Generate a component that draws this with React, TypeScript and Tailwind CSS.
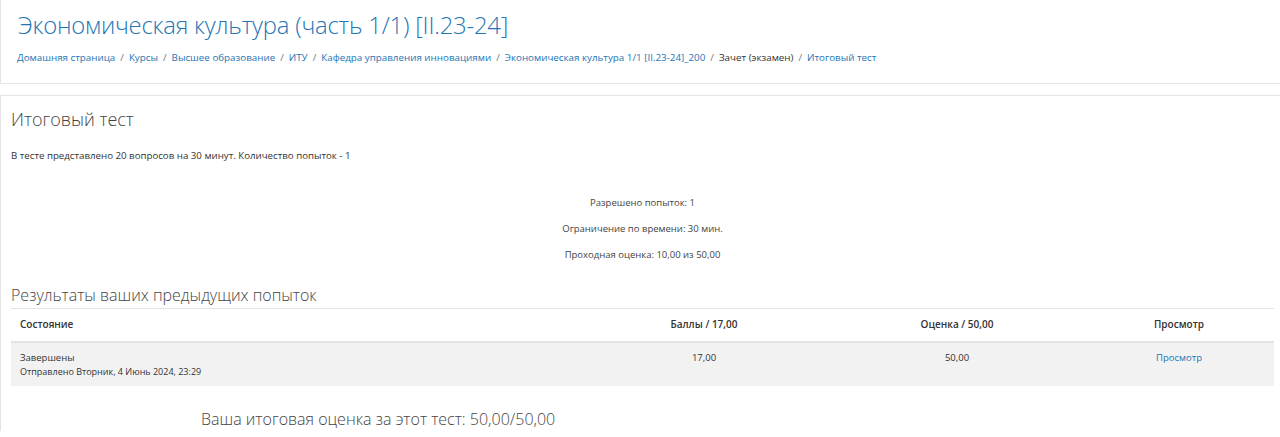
import React from 'react';

const crumbs = [
  { text: 'Домашняя страница', link: true },
  { text: 'Курсы', link: true },
  { text: 'Высшее образование', link: true },
  { text: 'ИТУ', link: true },
  { text: 'Кафедра управления инновациями', link: true },
  { text: 'Экономическая культура 1/1 [II.23-24]_200', link: true },
  { text: 'Зачет (экзамен)', link: false },
  { text: 'Итоговый тест', link: true },
];

const App: React.FC = () => {
  return (
    <div className="min-h-screen bg-white text-[#333] font-['Open_Sans',sans-serif]">
      {/* Шапка курса */}
      <header className="border-l border-b border-[#e5e5e5] pl-[17px] pt-[8px] pb-[16px] h-[84px]">
        <h1 className="text-[23.8px] leading-[34px] font-light text-[#2475b5] tracking-[-0.2px]">
          Экономическая культура (часть 1/1) [II.23-24]
        </h1>
        <nav className="mt-[8px] flex items-center text-[9.8px] leading-[16px] -ml-px">
          {crumbs.map((c, i) => (
            <React.Fragment key={i}>
              {i > 0 && <span className="mx-[5px] text-[#777]">/</span>}
              <span className={c.link ? 'text-[#2475b5]' : 'text-[#333]'}>{c.text}</span>
            </React.Fragment>
          ))}
        </nav>
      </header>

      {/* Основной блок */}
      <main className="mt-[11px] border-l border-t border-[#e5e5e5] pl-[10px] pr-[6px] pt-[10px]">
        <h2 className="text-[18px] leading-[26px] font-light text-[#444]">Итоговый тест</h2>
        <p className="mt-[17px] text-[9.7px] leading-[14px] text-[#333]">
          В тесте представлено 20 вопросов на 30 минут. Количество попыток - 1
        </p>

        <div className="mt-[33px] flex flex-col items-center gap-[12px] text-[9.5px] leading-[14px] text-[#444]">
          <p>Разрешено попыток: 1</p>
          <p>Ограничение по времени: 30 мин.</p>
          <p>Проходная оценка: 10,00 из 50,00</p>
        </div>

        <h3 className="mt-[21px] text-[16px] leading-[24px] font-light text-[#444]">
          Результаты ваших предыдущих попыток
        </h3>

        <table className="mt-[1px] w-full border-collapse text-[9.5px] text-[#333]">
          <thead>
            <tr className="border-t border-b-2 border-[#e3e3e3] h-[33px]">
              <th className="w-[567px] pl-[9px] text-left font-semibold text-[10px]">Состояние</th>
              <th className="w-[252px] text-center font-semibold text-[10px]">Баллы / 17,00</th>
              <th className="w-[254px] text-center font-semibold text-[10px]">Оценка / 50,00</th>
              <th className="text-center font-semibold text-[10px]">Просмотр</th>
            </tr>
          </thead>
          <tbody>
            <tr className="bg-[#f2f2f2] h-[44px] align-top">
              <td className="pl-[9px] pt-[8px] leading-[14px]">
                <div>Завершены</div>
                <div className="text-[9px]">Отправлено Вторник, 4 Июнь 2024, 23:29</div>
              </td>
              <td className="pt-[8px] text-center leading-[14px]">17,00</td>
              <td className="pt-[8px] text-center leading-[14px]">50,00</td>
              <td className="pt-[8px] text-center leading-[14px]">
                <a href="#" className="text-[#2475b5]">Просмотр</a>
              </td>
            </tr>
          </tbody>
        </table>

        <p className="mt-[21px] ml-[190px] text-[16px] leading-[24px] font-light text-[#444]">
          Ваша итоговая оценка за этот тест: 50,00/50,00
        </p>
      </main>
    </div>
  );
};

export default App;
